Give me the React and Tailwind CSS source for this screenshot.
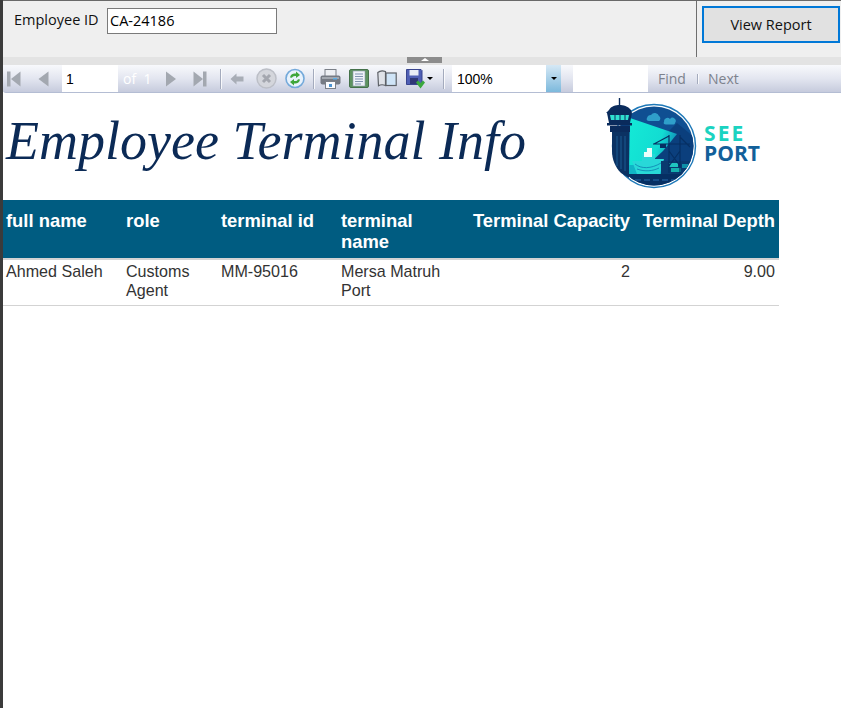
const COLUMNS = [
  { key: 'name', label: 'full name', width: 'w-[120px]', pad: 'pr-[4px]' },
  { key: 'role', label: 'role', width: 'w-[95px]', pad: 'pr-[4px]' },
  { key: 'id', label: 'terminal id', width: 'w-[120px]', pad: 'pr-[4px]' },
  { key: 'terminal', label: 'terminal name', width: 'w-[132px]', pad: 'pr-[14px]' },
  { key: 'capacity', label: 'Terminal Capacity', width: 'w-[164px]', pad: 'pr-[4px]', right: true },
  { key: 'depth', label: 'Terminal Depth', width: 'w-[145px]', pad: 'pr-[4px]', right: true },
]

const ROW = {
  name: 'Ahmed Saleh',
  role: 'Customs Agent',
  id: 'MM-95016',
  terminal: 'Mersa Matruh Port',
  capacity: '2',
  depth: '9.00',
}

function Separator({ className = '' }) {
  return <div className={`w-[2px] h-[20px] shrink-0 border-l border-[#a4abbd] bg-white/80 ${className}`} />
}

function FirstIcon() {
  return (
    <svg width="14" height="16" viewBox="0 0 14 16" className="ml-[4px] shrink-0">
      <rect x="0" y="0.5" width="3.5" height="15" fill="#a3a8b0" />
      <path d="M13.5 0.5V15.5L4 8Z" fill="#a3a8b0" />
    </svg>
  )
}

function PrevIcon() {
  return (
    <svg width="11" height="16" viewBox="0 0 11 16" className="ml-[17px] shrink-0">
      <path d="M10.5 0.5V15.5L0.5 8Z" fill="#a3a8b0" />
    </svg>
  )
}

function NextIcon() {
  return (
    <svg width="10" height="16" viewBox="0 0 10 16" className="ml-[13px] shrink-0">
      <path d="M0 0.5V15.5L10 8Z" fill="#a3a8b0" />
    </svg>
  )
}

function LastIcon() {
  return (
    <svg width="14" height="16" viewBox="0 0 14 16" className="ml-[17px] shrink-0">
      <path d="M0.5 0.5V15.5L10 8Z" fill="#a3a8b0" />
      <rect x="10" y="0.5" width="3.5" height="15" fill="#a3a8b0" />
    </svg>
  )
}

function BackIcon() {
  return (
    <svg width="14" height="12" viewBox="0 0 14 12" className="ml-[8px] shrink-0">
      <path d="M0.5 6L6.5 0.5V3.5H13.5V8.5H6.5V11.5Z" fill="#a8adb6" />
    </svg>
  )
}

function StopIcon() {
  return (
    <svg width="21" height="21" viewBox="0 0 21 21" className="ml-[12px] shrink-0">
      <circle cx="10.500" cy="10.500" r="9.500" fill="#d4d6dc" stroke="#bcbfc7" strokeWidth="1.500" />
      <path d="M7 7L14 14M14 7L7 14" stroke="#a4a7af" strokeWidth="3" />
    </svg>
  )
}

function RefreshIcon() {
  return (
    <svg width="20" height="21" viewBox="0 0 20 21" className="ml-[8px] shrink-0">
      <circle cx="10" cy="10.500" r="9" fill="#e8f2fc" stroke="#73a9da" strokeWidth="1.600" />
      <path d="M5 9.500C5.500 6.500 8 5 11 5.600V3.500L15 7L11 10V8C9 7.600 7.600 8.300 7 9.800Z" fill="#3ea63a" />
      <path d="M15 11.500C14.500 14.500 12 16 9 15.400V17.500L5 14L9 11V13C11 13.400 12.400 12.700 13 11.200Z" fill="#3ea63a" />
    </svg>
  )
}

function PrintIcon() {
  return (
    <svg width="21" height="20" viewBox="0 0 21 20" className="ml-[5px] shrink-0">
      <rect x="5" y="0.500" width="11" height="7" fill="#eef0f4" stroke="#7b8088" />
      <rect x="0.500" y="6.500" width="20" height="9" rx="2" fill="#767b84" />
      <rect x="2" y="8" width="17" height="2" fill="#a3a8b0" />
      <rect x="13" y="9" width="4" height="1.500" fill="#5fb0e8" />
      <rect x="5.500" y="12.500" width="10" height="7" fill="#fbfcfe" stroke="#7b8088" />
      <rect x="9" y="15" width="3" height="3" fill="#4c93d0" />
    </svg>
  )
}

function PageIcon() {
  return (
    <svg width="20" height="19" viewBox="0 0 20 19" className="ml-[8px] shrink-0">
      <rect x="0.500" y="0.500" width="19" height="18" rx="1.500" fill="#5d9360" stroke="#44714a" />
      <rect x="4" y="2" width="12" height="15" fill="#eef2f8" stroke="#8a97a8" strokeWidth="0.600" />
      <path d="M6 5H14M6 7.500H14M6 10H14M6 12.500H14M6 15H12" stroke="#7f93b0" strokeWidth="1" />
    </svg>
  )
}

function BookIcon() {
  return (
    <svg width="20" height="17" viewBox="0 0 20 17" className="ml-[8px] shrink-0">
      <path d="M0.800 2.500C3 0.500 6 0.500 8.500 1.500V15.500C6 14.500 3.500 14.500 1.500 15.800Z" fill="#dfe2e8" stroke="#5d6167" strokeWidth="1.200" />
      <rect x="9" y="3" width="10.200" height="12.500" fill="#cfe4f7" stroke="#5d6167" strokeWidth="1.200" />
    </svg>
  )
}

function SaveIcon() {
  return (
    <svg width="20" height="20" viewBox="0 0 20 20" className="ml-[9px] shrink-0">
      <path d="M0.500 0.500H15L16 1.500V15.500H0.500Z" fill="#4f5fb5" stroke="#39458f" />
      <rect x="3.500" y="1" width="9" height="5.500" fill="#e8ecf6" />
      <rect x="4" y="9" width="8" height="6" fill="#2e3775" />
      <path d="M10 13.500L12 11.500L14.500 14L17 11.500L19 13.500L14.500 19.500Z" fill="#3aa83c" />
    </svg>
  )
}

function Caret({ className = '' }) {
  return <div className={`w-0 h-0 shrink-0 border-x-[3px] border-x-transparent border-t-[3px] border-t-black ${className}`} />
}

function Logo() {
  return (
    <svg width="100" height="94" viewBox="604 95 100 94" className="shrink-0">
      <defs>
        <clipPath id="disc">
          <circle cx="655" cy="145" r="39.500" />
        </clipPath>
        <linearGradient id="beam" x1="0" y1="0" x2="1" y2="0.400">
          <stop offset="0" stopColor="#14ead6" />
          <stop offset="0.700" stopColor="#12dcd2" />
          <stop offset="1" stopColor="#0f8fb8" />
        </linearGradient>
      </defs>
      <circle cx="655" cy="145" r="41.500" fill="#fff" stroke="#1d78b8" strokeWidth="1.400" />
      <g clipPath="url(#disc)">
        <rect x="612" y="103" width="88" height="88" fill="#0f4f92" />
        <path d="M660 140L678 122L700 140V175H650Z" fill="#0b3f7d" />
        <path d="M631 117L678 133L664 150L640 172H630Z" fill="url(#beam)" />
        <path d="M630 164H662V173H630Z" fill="#10b4c6" />
        <path d="M633 160H643V153H647V147H652V153H656V158H665L661 173H638Z" fill="#28d8d8" />
        <path d="M648 147H653V156H645V151H648Z" fill="#eafffb" />
        <path d="M636 163C642 168 652 168 662 162M638 168C646 171 654 170 660 167" stroke="#0f7fb0" strokeWidth="0.800" fill="none" />
        <rect x="662" y="160" width="32" height="16" fill="#0a3a70" />
        <rect x="670" y="162" width="9" height="4" fill="#1fc6c0" />
        <rect x="672" y="167" width="10" height="4" fill="#15b0ae" />
        <rect x="683" y="163" width="7" height="4" fill="#0f8fa8" />
        <path d="M620 173H700V191H620Z" fill="#062f63" />
        <path d="M636 179H690" stroke="#2a72b6" strokeWidth="0.900" strokeDasharray="6 3" />
      </g>
      <path d="M654 143H691M670 134V172M681 134V172M670 135L655 143M681 136L691 146M670 150L681 165M681 150L670 165" stroke="#062f63" strokeWidth="1.200" fill="none" />
      <rect x="661" y="143" width="6" height="4" fill="#062f63" />
      <path d="M648 117A4 4 0 0 1 652 114A4.500 4.500 0 0 1 660 115A3 3 0 0 1 660 120H650C648 120 647 118.500 648 117Z" fill="#2f9fca" />
      <path d="M665 121A3.500 3.500 0 0 1 671 118A3 3 0 0 1 676 122C676 123 675 123.500 674 123.500H667C665 123.500 664 122 665 121Z" fill="#2f9fca" />
      <path d="M620.500 97V104" stroke="#0a2b5c" strokeWidth="1.400" />
      <path d="M610 109C612 105 617 104 620.500 104C624 104 629 105 632 109L633 112H607Z" fill="#0a2b5c" />
      <path d="M608 112H633L631 122H610Z" fill="#0a2b5c" />
      <path d="M611 114H630L629 119H612Z" fill="#30e0d0" />
      <path d="M616 114V119M621 114V119M626 114V119" stroke="#0a2b5c" strokeWidth="1" />
      <rect x="608" y="122" width="25" height="2.500" fill="#0a2b5c" />
      <rect x="611" y="125" width="20" height="6" fill="#0a2b5c" />
      <path d="M613 131H630V177L622 172C616 166 613 158 613 150Z" fill="#0b3263" />
      <path d="M618 135V165M622 135V168M626 135V170" stroke="#1e659e" strokeWidth="0.800" />
    </svg>
  )
}

export default function App() {
  return (
    <div className="w-[841px] h-[708px] overflow-hidden bg-white flex font-['Liberation_Sans',sans-serif]">
      <div className="w-[3px] shrink-0 bg-[#3b3b3b]" />
      <div className="flex-1 flex flex-col min-w-0">
        {/* parameter area */}
        <div className="h-[1px] bg-[#696969]" />
        <div className="h-[56px] bg-[#efefef] flex font-['Open_Sans',sans-serif]">
          <div className="w-[693px] flex items-start">
            <label className="ml-[11px] mt-[9px] w-[93px] text-[14.5px] leading-[20px] text-[#111] whitespace-nowrap">Employee ID</label>
            <div className="mt-[7px] w-[170px] h-[26px] border border-[#7a7a7a] bg-white px-[2px] text-[14.5px] leading-[24px] text-black">
              CA-24186
            </div>
          </div>
          <div className="flex-1 border-l border-[#6e6e6e] pl-[5px] pt-[5px]">
            <button className="w-[138px] h-[37px] border-2 border-[#0078d7] bg-[#e1e1e1] text-[14.5px] text-[#111]">
              View Report
            </button>
          </div>
        </div>

        {/* collapse splitter */}
        <div className="h-[8px] bg-[#e3e3e3] pl-[404px]">
          <div className="w-[35px] h-[6px] bg-[#8c8c8c] flex justify-center pt-[1px]">
            <div className="w-0 h-0 border-x-[4px] border-x-transparent border-b-[3px] border-b-white" />
          </div>
        </div>

        {/* toolbar */}
        <div className="h-[28px] flex items-center rounded-bl-[3px] border-b border-[#b4bdd3] bg-gradient-to-b from-[#f8f9fc] via-[#e3e6f0] to-[#c6cbdd] text-[14px] font-['Open_Sans',sans-serif]">
          <FirstIcon />
          <PrevIcon />
          <div className="ml-[13px] w-[56px] h-full bg-white px-[4px] leading-[28px] text-black shrink-0 font-['Liberation_Sans',sans-serif]">1</div>
          <span className="ml-[5px] w-[30px] shrink-0 text-white whitespace-nowrap">of&nbsp;&nbsp;1</span>
          <NextIcon />
          <LastIcon />
          <Separator className="ml-[13px]" />
          <BackIcon />
          <StopIcon />
          <RefreshIcon />
          <Separator className="ml-[8px]" />
          <PrintIcon />
          <PageIcon />
          <BookIcon />
          <SaveIcon />
          <Caret className="ml-[1px]" />
          <Separator className="ml-[10px]" />
          <div className="ml-[7px] w-[94px] h-full bg-white px-[5px] leading-[28px] text-black shrink-0 font-['Liberation_Sans',sans-serif]">100%</div>
          <div className="w-[15px] h-full shrink-0 flex items-center justify-center bg-gradient-to-b from-[#d5e8f5] to-[#7cb9dc]">
            <Caret />
          </div>
          <div className="ml-[12px] w-[75px] h-full bg-white shrink-0" />
          <span className="ml-[10px] w-[28px] text-[#7d828d]">Find</span>
          <div className="ml-[11px] w-[2px] h-[10px] shrink-0 border-l border-[#a4abbd] bg-white/80" />
          <span className="ml-[9px] text-[#7d828d]">Next</span>
        </div>

        {/* report body */}
        <div className="w-[776px] flex items-start justify-between h-[107px]">
          <h1 className="ml-[3px] mt-[16px] font-['Liberation_Serif',serif] italic font-normal text-[54px] leading-[64px] text-[#0b2a56] whitespace-nowrap">
            Employee Terminal Info
          </h1>
          <div className="flex items-center mr-[19px] mt-[3px]">
            <Logo />
            <div className="ml-[1px] font-['Open_Sans',sans-serif] font-bold text-[21px] leading-[20px]">
              <div className="text-[#1bd3c1] tracking-[2px]">SEE</div>
              <div className="text-[#12609a]">PORT</div>
            </div>
          </div>
        </div>

        <table className="w-[776px] table-fixed border-collapse text-[16.1px] leading-[19px]">
          <thead>
            <tr className="bg-[#005c81] text-white h-[59px] border-b-2 border-[#d3d3d3]">
              {COLUMNS.map((col) => (
                <th
                  key={col.key}
                  className={`${col.width} ${col.pad} align-top pt-[10px] pl-[3px] font-bold text-[18.4px] leading-[21px] ${col.right ? 'text-right whitespace-nowrap' : 'text-left'}`}
                >
                  {col.label}
                </th>
              ))}
            </tr>
          </thead>
          <tbody>
            <tr className="h-[46px] border-b border-[#d3d3d3] text-[#333]">
              {COLUMNS.map((col) => (
                <td
                  key={col.key}
                  className={`${col.pad} align-top pt-[2px] pl-[3px] ${col.right ? 'text-right' : 'text-left'}`}
                >
                  {ROW[col.key]}
                </td>
              ))}
            </tr>
          </tbody>
        </table>
      </div>
    </div>
  )
}
